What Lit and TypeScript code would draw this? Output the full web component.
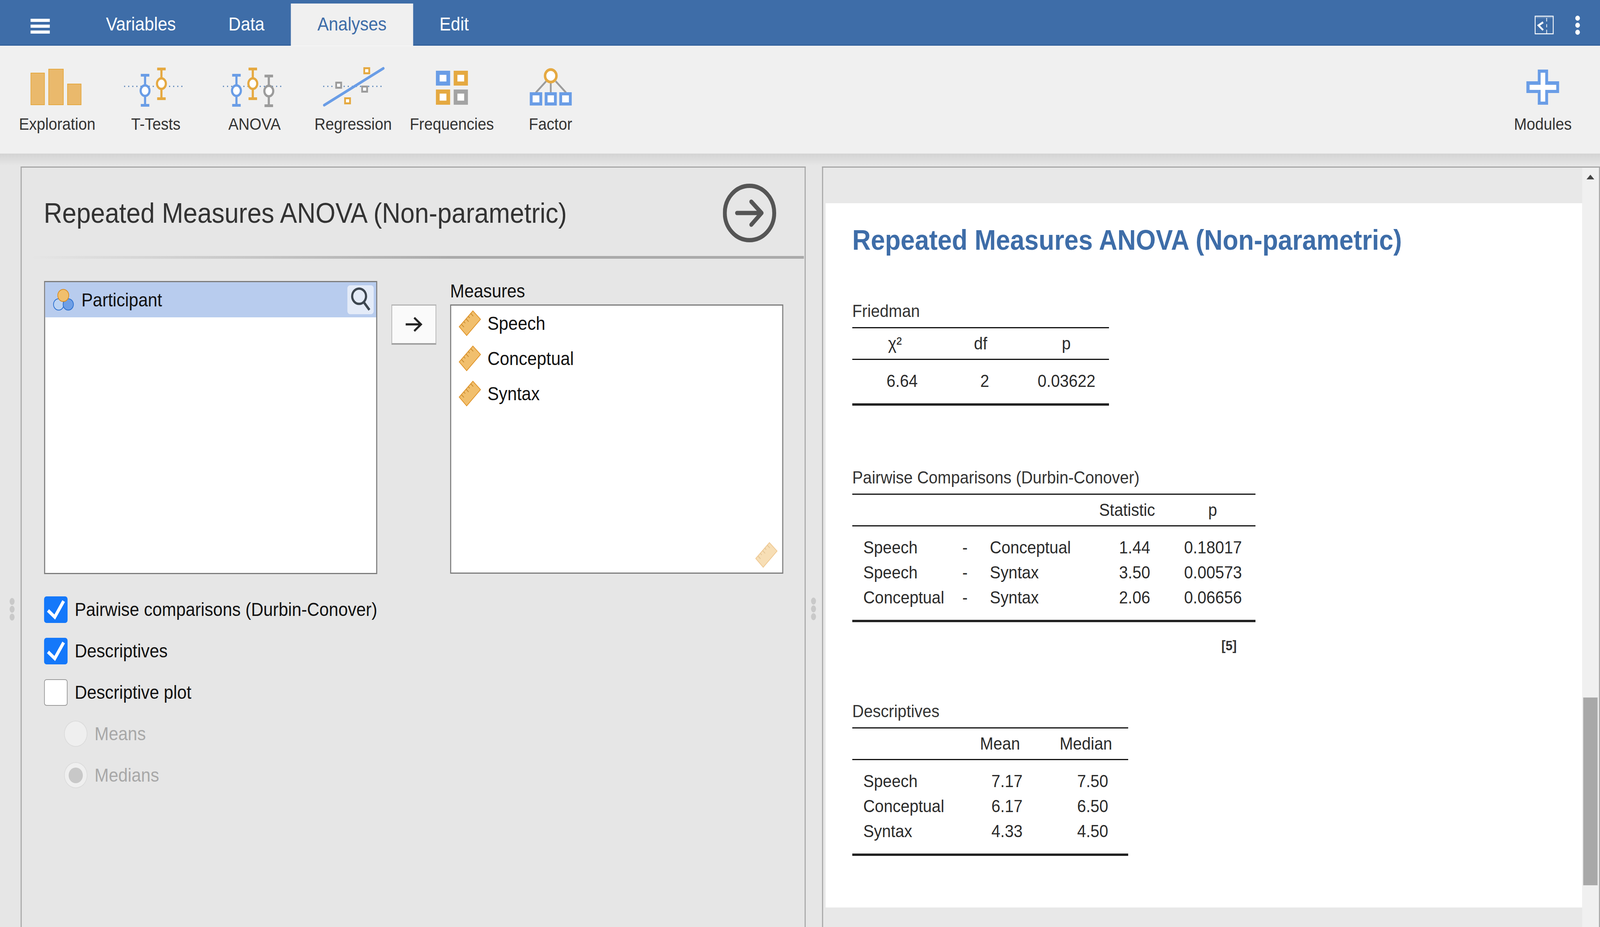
import { LitElement, html, css, svg } from 'lit';
import { customElement } from 'lit/decorators.js';

const BLUE = '#6a9de6';
const ORANGE = '#e5a941';
const GRAY = '#a3a3a3';

// the layout is measured on a 4500px wide design; the window can come out narrower
const DESIGN_WIDTH = 4500;

type Cell = { text: string; pad?: number; align?: string };
type Col = { width: number; head: string };
type Table = { caption: string; cls: string; cols: Col[]; rows: Cell[][]; note?: string };

const num = (text: string, pad: number): Cell => ({ text, pad, align: 'right' });
const left = (text: string, pad: number): Cell => ({ text, pad, align: 'left' });
const mid = (text: string): Cell => ({ text, align: 'center' });

const TABLES: Table[] = [
  {
    caption: 'Friedman',
    cls: 's1',
    cols: [
      { width: 240, head: 'χ²' },
      { width: 242, head: 'df' },
      { width: 240, head: 'p' },
    ],
    rows: [[num('6.64', 56), num('2', 97), num('0.03622', 38)]],
  },
  {
    caption: 'Pairwise Comparisons (Durbin-Conover)',
    cls: 's2',
    cols: [
      { width: 293, head: '' },
      { width: 48, head: '' },
      { width: 312, head: '' },
      { width: 240, head: 'Statistic' },
      { width: 241, head: 'p' },
    ],
    rows: [
      [left('Speech', 31), mid('-'), left('Conceptual', 46), num('1.44', 55), num('0.18017', 38)],
      [left('Speech', 31), mid('-'), left('Syntax', 46), num('3.50', 55), num('0.00573', 38)],
      [left('Conceptual', 31), mid('-'), left('Syntax', 46), num('2.06', 55), num('0.06656', 38)],
    ],
    note: '[5]',
  },
  {
    caption: 'Descriptives',
    cls: 's3',
    cols: [
      { width: 293, head: '' },
      { width: 245, head: 'Mean' },
      { width: 238, head: 'Median' },
    ],
    rows: [
      [left('Speech', 31), num('7.17', 59), num('7.50', 56)],
      [left('Conceptual', 31), num('6.17', 59), num('6.50', 56)],
      [left('Syntax', 31), num('4.33', 59), num('4.50', 56)],
    ],
  },
];

function errorBar(x: number, top: number, bottom: number, cy: number, color: string) {
  return svg`
    <line x1=${x} y1=${top} x2=${x} y2=${bottom} stroke=${color} stroke-width="6"></line>
    <rect x=${x - 12} y=${top} width="24" height="7" fill=${color}></rect>
    <rect x=${x - 12} y=${bottom - 7} width="24" height="7" fill=${color}></rect>
    <ellipse cx=${x} cy=${cy} rx="12.5" ry="13.5" fill="#fff" stroke=${color} stroke-width="6"></ellipse>`;
}

function dotted(x1: number, x2: number) {
  return svg`<line x1=${x1} y1="220" x2=${x2} y2="220" stroke="#4f7db5" stroke-width="3" stroke-dasharray="3 8.5"></line>`;
}

function box(x: number, y: number, w: number, h: number, color: string, border: number) {
  return svg`<rect x=${x + border / 2} y=${y + border / 2} width=${w - border} height=${h - border} fill="#fff" stroke=${color} stroke-width=${border}></rect>`;
}

const ICONS: { label: string; cx: number; art: unknown }[] = [
  {
    label: 'Exploration',
    cx: 161,
    art: svg`
      <rect x="87" y="186" width="38" height="81" fill="#eab96c" stroke=${ORANGE} stroke-width="2"></rect>
      <rect x="137" y="176" width="41" height="91" fill="#eab96c" stroke=${ORANGE} stroke-width="2"></rect>
      <rect x="190" y="214" width="38" height="53" fill="#eab96c" stroke=${ORANGE} stroke-width="2"></rect>`,
  },
  {
    label: 'T-Tests',
    cx: 438,
    art: svg`${dotted(349, 521)}
      ${errorBar(408, 188, 272, 231, BLUE)}
      ${errorBar(454, 172, 255, 213, ORANGE)}`,
  },
  {
    label: 'ANOVA',
    cx: 716,
    art: svg`${dotted(627, 799)}
      ${errorBar(665, 188, 272, 231, BLUE)}
      ${errorBar(711, 172, 255, 213, ORANGE)}
      ${errorBar(756, 190, 273, 232, '#9c9c9c')}`,
  },
  {
    label: 'Regression',
    cx: 993,
    art: svg`${dotted(909, 1081)}
      ${box(1022, 171, 19, 18, ORANGE, 5)}
      ${box(943, 208, 19, 18, '#9c9c9c', 5)}
      ${box(1016, 218, 19, 18, '#9c9c9c', 5)}
      ${box(968, 248, 19, 18, ORANGE, 5)}
      <line x1="912" y1="268" x2="1078" y2="174" stroke=${BLUE} stroke-width="7" stroke-linecap="round"></line>`,
  },
  {
    label: 'Frequencies',
    cx: 1271,
    art: svg`
      ${box(1226, 180, 40, 38, BLUE, 10.5)}
      ${box(1276, 180, 40, 38, ORANGE, 10.5)}
      ${box(1226, 228, 40, 39, ORANGE, 10.5)}
      ${box(1276, 228, 40, 39, GRAY, 10.5)}`,
  },
  {
    label: 'Factor',
    cx: 1548,
    art: svg`
      <path d="M1536 207 L1507 236 M1549 210 V236 M1563 207 L1592 236" stroke="#9c9c9c" stroke-width="5" fill="none"></path>
      <ellipse cx="1549" cy="193" rx="16" ry="16" fill="#fff" stroke=${ORANGE} stroke-width="7"></ellipse>
      ${box(1490, 235, 35, 34, BLUE, 8)}
      ${box(1532, 235, 34, 34, BLUE, 8)}
      ${box(1573, 235, 35, 34, BLUE, 8)}`,
  },
];

const plusIcon = svg`
  <path d="M4325 177 H4354 V207 H4385 V237 H4354 V267 H4325 V237 H4293 V207 H4325 Z" fill=${BLUE}></path>
  <path d="M4333 185 H4346 V216 H4377 V229 H4346 V259 H4333 V229 H4302 V216 H4333 Z" fill="#fff"></path>`;

function ruler(extra = '') {
  return html`<svg class="ruler ${extra}" width="63" height="66" viewBox="0 0 63 66">
    <polygon points="40,1.5 61.5,23 22.5,64.5 1.5,42" fill="#f1bf6d" stroke="#e0952b" stroke-width="2"></polygon>
    <path d="M34 8 L41 15 M27 15.5 L31 19.5 M21 22 L28 29 M14.5 29 L18.5 33 M8 36 L15 43" stroke="#c98a2e" stroke-width="1.8" fill="none"></path>
  </svg>`;
}

function checkbox(on: boolean) {
  return html`<span class="check ${on ? 'on' : ''}">
    ${on
      ? html`<svg width="66" height="68" viewBox="0 0 66 68">
          <polyline points="11,36 30,53 55,12" fill="none" stroke="#fff" stroke-width="8.5"></polyline>
        </svg>`
      : ''}
  </span>`;
}

@customElement('app-root')
export class AppRoot extends LitElement {
  static styles = css`
    :host {
      display: block;
      height: 2372px;
      overflow: hidden;
      background: #e6e6e6;
      font-family: 'Liberation Sans', Arial, sans-serif;
      color: #333;
    }

    .stage {
      width: 4500px;
      height: 2372px;
      transform-origin: 0 0;
    }

    .topbar {
      display: flex;
      height: 117px;
      background: #3e6da8;
      box-shadow: inset 0 -3px 0 #34629c;
      color: #fff;
      font-size: 48px;
    }

    .menu {
      width: 224px;
      box-sizing: border-box;
      padding: 48px 0 0 86px;
    }

    .menu span {
      display: block;
      width: 54px;
      height: 8px;
      margin-bottom: 7px;
      background: #fff;
    }

    .tab {
      margin-top: 9px;
      padding: 0 74px;
      line-height: 106px;
    }

    .tab.active {
      background: #f0f0f0;
      color: #3e6da8;
      width: 344px;
      box-sizing: border-box;
      text-align: center;
      padding: 0;
    }

    .top-icons {
      margin-left: auto;
      display: flex;
      gap: 60px;
      padding: 40px 56px 0 0;
      height: 50px;
    }

    .ribbon {
      display: flex;
      height: 276px;
      box-sizing: border-box;
      padding: 43px 22px 0;
      background: #f0f0f0;
      border-top: 1px solid #fafafa;
    }

    .tool {
      width: 277.5px;
      display: flex;
      flex-direction: column;
      align-items: center;
      font-size: 43px;
      line-height: 72px;
    }

    .tool.right {
      margin-left: auto;
    }

    .main {
      display: flex;
      height: 1979px;
      box-sizing: border-box;
      padding-top: 33px;
      background: linear-gradient(#d3d3d3, #e6e6e6 30px);
    }

    .gutter {
      box-sizing: border-box;
      display: flex;
      flex-direction: column;
      gap: 2px;
    }

    .gutter.a {
      width: 58px;
      padding: 1104px 0 0 27px;
    }

    .gutter.b {
      width: 46px;
      padding: 1103px 0 0 15px;
    }

    .gutter span {
      width: 14px;
      height: 18px;
      border-radius: 50%;
      background: #c9c9c9;
    }

    .options {
      width: 2208px;
      box-sizing: border-box;
      border: 3px solid #a6a6a6;
      border-bottom: 0;
    }

    .opt-title {
      height: 226px;
      box-sizing: border-box;
      padding: 6px 80px 0 62px;
      display: flex;
      align-items: center;
      justify-content: space-between;
      font-size: 72px;
      color: #333;
    }

    .rule {
      height: 7px;
      margin-right: 2px;
      background: linear-gradient(to right, transparent 1%, #aaa 55%);
    }

    .opt-body {
      padding: 57px 0 0 63px;
      font-size: 48px;
      color: #111;
    }

    .lists {
      display: flex;
      align-items: flex-start;
    }

    .list {
      width: 937px;
      box-sizing: border-box;
      border: 3px solid #7c7c7c;
      background: #fff;
      position: relative;
    }

    .list.supplier {
      height: 750px;
    }

    .list.target {
      height: 689px;
    }

    .item {
      height: 90px;
      box-sizing: border-box;
      display: flex;
      align-items: center;
      padding-left: 21px;
      gap: 18px;
    }

    .item.selected {
      background: #b8ccee;
      padding-right: 7px;
      gap: 19px;
    }

    .search {
      margin-left: auto;
      width: 74px;
      height: 74px;
      border-radius: 8px;
      background: #e4ebf8;
    }

    .move {
      width: 126px;
      height: 103px;
      margin: 60px 39px 0 40px;
      box-sizing: border-box;
      display: flex;
      align-items: center;
      justify-content: center;
      background: #fafafa;
      border: 2px solid #b4b4b4;
      border-bottom: 4px solid #a0a0a0;
      border-top: 3px solid #b4b4b4;
    }

    .target-label {
      height: 60px;
      line-height: 52px;
    }

    .ghost {
      position: absolute;
      right: 13px;
      bottom: 12px;
      opacity: 0.5;
    }

    .ruler {
      flex: none;
    }

    .checks {
      display: flex;
      flex-direction: column;
      gap: 39px;
      margin-top: 57px;
    }

    .row {
      display: flex;
      align-items: center;
      gap: 20px;
      height: 67px;
    }

    .row.sub {
      margin-left: 56px;
      color: #a8a8a8;
    }

    .check {
      width: 66px;
      height: 68px;
      box-sizing: border-box;
      border-radius: 7px;
      background: #fff;
      border: 2px solid #9a9a9a;
    }

    .check.on {
      background: #1478fa;
      border: 0;
    }

    .radio {
      width: 66px;
      height: 67px;
      box-sizing: border-box;
      border-radius: 50%;
      background: #efefef;
      border: 2px solid #dcdcdc;
      display: flex;
      align-items: center;
      justify-content: center;
    }

    .radio span {
      width: 40px;
      height: 40px;
      border-radius: 50%;
      background: #c8c8c8;
    }

    .results {
      flex: 1;
      display: flex;
      box-sizing: border-box;
      border: 3px solid #a6a6a6;
      border-width: 3px 3px 0;
      background: #e8e8e8;
    }

    .scroller {
      flex: 1;
      padding: 91px 0 0 7px;
    }

    .page {
      height: 1802px;
      box-sizing: border-box;
      padding: 52px 0 0 75px;
      background: #fff;
    }

    .page h1 {
      margin: 0;
      font-size: 72px;
      line-height: 84px;
      font-weight: 700;
      color: #3e6da8;
    }

    .caption {
      height: 88px;
      line-height: 94px;
      font-size: 45px;
      color: #333;
    }

    .s1 {
      margin-top: 93px;
    }

    .s2 {
      margin-top: 137px;
    }

    .s3 {
      margin-top: 61px;
    }

    .table {
      border-top: 3px solid #111;
      border-bottom: 6px solid #222;
      font-size: 45px;
      color: #2b2b2b;
    }

    .thead,
    .tr {
      display: grid;
      align-items: center;
    }

    .thead {
      height: 81px;
      box-sizing: border-box;
      border-bottom: 3px solid #111;
      text-align: center;
    }

    .tbody {
      padding: 22px 0 25px;
    }

    .tr {
      height: 64px;
    }

    .note {
      height: 120px;
      line-height: 120px;
      padding-right: 53px;
      text-align: right;
      font-size: 35px;
      font-weight: 700;
      color: #333;
    }

    .scrollbar {
      width: 47px;
      box-sizing: border-box;
      padding: 18px 0 0 3px;
      background: #f0f0f0;
    }

    .arrow-up {
      display: block;
      margin-left: 9px;
    }

    .thumb {
      width: 40px;
      height: 480px;
      margin-top: 1326px;
      background: #a8a8a8;
      box-shadow: 0 0 0 1px #e0e0e0;
    }
  `;

  private tableView(t: Table) {
    const columns = t.cols.map((c) => `${c.width}px`).join(' ');
    const width = t.cols.reduce((sum, c) => sum + c.width, 0);
    return html`
      <section class=${t.cls} style="width: ${width}px;">
        <div class="caption">${t.caption}</div>
        <div class="table">
          <div class="thead" style="grid-template-columns: ${columns};">
            ${t.cols.map((c) => html`<div>${c.head}</div>`)}
          </div>
          <div class="tbody">
            ${t.rows.map(
              (r) => html`
                <div class="tr" style="grid-template-columns: ${columns};">
                  ${r.map(
                    (c) => html`<div style="text-align: ${c.align}; padding-${c.align}: ${c.pad ?? 0}px;">${c.text}</div>`,
                  )}
                </div>
              `,
            )}
          </div>
        </div>
        ${t.note ? html`<div class="note">${t.note}</div>` : ''}
      </section>
    `;
  }

  private topbarView() {
    return html`
      <div class="topbar">
        <div class="menu"><span></span><span></span><span></span></div>
        <div class="tab">Variables</div>
        <div class="tab">Data</div>
        <div class="tab active">Analyses</div>
        <div class="tab">Edit</div>
        <div class="top-icons">
          <svg width="54" height="48" viewBox="0 0 54 48">
            <rect x="1.5" y="1.5" width="51" height="45" fill="none" stroke="#fff" stroke-width="2.5"></rect>
            <line x1="2" y1="5" x2="52" y2="5" stroke="#fff" stroke-width="1" opacity="0.6"></line>
            <polyline points="24,17 11,25 24,37" fill="none" stroke="#fff" stroke-width="5"></polyline>
            <path d="M34 6 V15 M34 22 V30 M34 36 V46" stroke="#fff" stroke-width="2"></path>
          </svg>
          <svg width="14" height="50" viewBox="0 0 14 50">
            <circle cx="7" cy="6.5" r="6.5" fill="#fff"></circle>
            <circle cx="7" cy="24.5" r="6.5" fill="#fff"></circle>
            <circle cx="7" cy="42.5" r="6.5" fill="#fff"></circle>
          </svg>
        </div>
      </div>
    `;
  }

  private ribbonView() {
    return html`
      <div class="ribbon">
        ${ICONS.map(
          (i) => html`
            <div class="tool">
              <svg width="240" height="120" viewBox="${i.cx - 120} 160 240 120">${i.art}</svg>
              <span>${i.label}</span>
            </div>
          `,
        )}
        <div class="tool right">
          <svg width="240" height="120" viewBox="4219 160 240 120">${plusIcon}</svg>
          <span>Modules</span>
        </div>
      </div>
    `;
  }

  private optionsView() {
    return html`
      <div class="options">
        <div class="opt-title">
          <span>Repeated Measures ANOVA (Non-parametric)</span>
          <svg width="150" height="150" viewBox="0 0 150 150">
            <circle cx="75" cy="75" r="69.5" fill="none" stroke="#555" stroke-width="11"></circle>
            <path d="M40 75 H109 M80 46 L109 75 L80 105" fill="none" stroke="#555" stroke-width="11" stroke-linecap="round" stroke-linejoin="round"></path>
          </svg>
        </div>
        <div class="rule"></div>
        <div class="opt-body">
          <div class="lists">
            <div class="list supplier">
              <div class="item selected">
                <svg width="62" height="56" viewBox="0 0 62 56">
                  <circle cx="17" cy="40" r="14.5" fill="#bcd3f2" stroke="#2a6fd0" stroke-width="2"></circle>
                  <circle cx="44" cy="40" r="14.5" fill="#6f9fe5" stroke="#2a6fd0" stroke-width="2"></circle>
                  <circle cx="30" cy="17" r="15.5" fill="#f1bf6d" stroke="#d98e26" stroke-width="2"></circle>
                </svg>
                <span>Participant</span>
                <div class="search">
                  <svg width="74" height="74" viewBox="0 0 74 74">
                    <circle cx="33" cy="28" r="19.5" fill="none" stroke="#3d4650" stroke-width="6"></circle>
                    <line x1="46" y1="43" x2="62" y2="63" stroke="#3d4650" stroke-width="6.5"></line>
                  </svg>
                </div>
              </div>
            </div>
            <div class="move">
              <svg width="48" height="38" viewBox="0 0 48 38">
                <path d="M1 19 H44 M25 2 L44 19 L25 36" fill="none" stroke="#222" stroke-width="5.5"></path>
              </svg>
            </div>
            <div>
              <div class="target-label">Measures</div>
              <div class="list target">
                ${['Speech', 'Conceptual', 'Syntax'].map(
                  (name) => html`<div class="item">${ruler()}<span>${name}</span></div>`,
                )}
                ${ruler('ghost')}
              </div>
            </div>
          </div>
          <div class="checks">
            <div class="row">${checkbox(true)}<span>Pairwise comparisons (Durbin-Conover)</span></div>
            <div class="row">${checkbox(true)}<span>Descriptives</span></div>
            <div class="row">${checkbox(false)}<span>Descriptive plot</span></div>
            <div class="row sub"><span class="radio"></span><span>Means</span></div>
            <div class="row sub"><span class="radio"><span></span></span><span>Medians</span></div>
          </div>
        </div>
      </div>
    `;
  }

  render() {
    const fit = Math.min(1, window.innerWidth / DESIGN_WIDTH);
    return html`
      <div class="stage" style="transform: scaleX(${fit});">
        ${this.topbarView()} ${this.ribbonView()}
        <div class="main">
          <div class="gutter a"><span></span><span></span><span></span></div>
          ${this.optionsView()}
          <div class="gutter b"><span></span><span></span><span></span></div>
          <div class="results">
            <div class="scroller">
              <div class="page">
                <h1>Repeated Measures ANOVA (Non-parametric)</h1>
                ${TABLES.map((t) => this.tableView(t))}
              </div>
            </div>
            <div class="scrollbar">
              <svg class="arrow-up" width="22" height="12" viewBox="0 0 22 12"><polygon points="11,0 22,12 0,12" fill="#444"></polygon></svg>
              <div class="thumb"></div>
            </div>
          </div>
        </div>
      </div>
    `;
  }
}
